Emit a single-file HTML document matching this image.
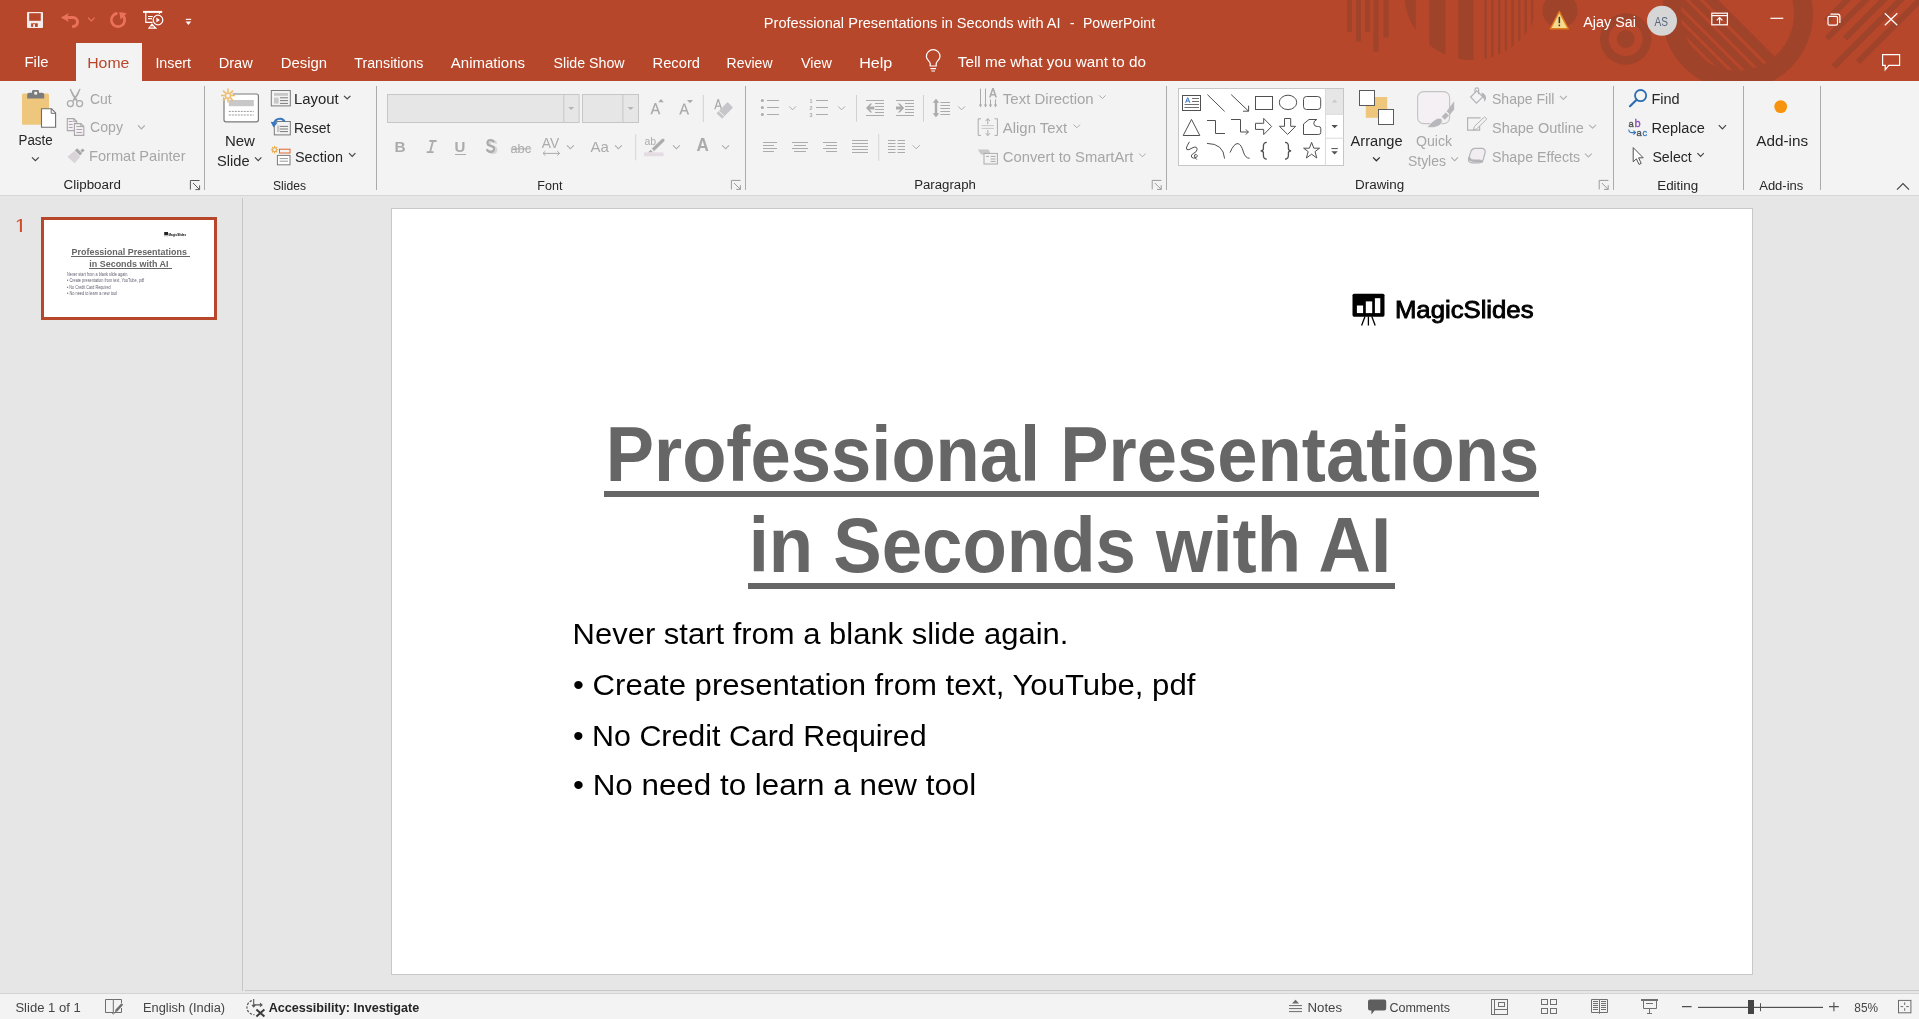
<!DOCTYPE html>
<html><head><meta charset="utf-8"><title>PowerPoint</title>
<style>
html,body{margin:0;padding:0;width:1919px;height:1019px;overflow:hidden;background:#E6E6E6;}
svg{position:absolute;left:0;top:0;display:block;will-change:transform;}
text{font-family:"Liberation Sans",sans-serif;white-space:pre;}
</style></head><body>
<svg width="1919" height="1019" viewBox="0 0 1919 1019">
<!-- backgrounds -->
<rect x="0" y="0" width="1919" height="81" fill="#B7472A"/>
<!-- title bar pattern -->
<defs>
  <clipPath id="cpA">
    <rect x="1405" y="0" width="10.7" height="80"/>
    <rect x="1429.3" y="0" width="16.1" height="80"/>
    <rect x="1458.2" y="0" width="15.3" height="80"/>
    <rect x="1484.4" y="0" width="2.6" height="80"/>
    <rect x="1491" y="0" width="2.7" height="80"/>
    <rect x="1498" y="0" width="2.5" height="80"/>
    <rect x="1504.8" y="0" width="2.4" height="80"/>
    <rect x="1511.3" y="0" width="2.5" height="80"/>
    <rect x="1518" y="0" width="2.5" height="80"/>
    <rect x="1524.6" y="0" width="2.5" height="80"/>
    <rect x="1530.9" y="0" width="2.6" height="80"/>
  </clipPath>
  <clipPath id="cpRing"><circle cx="1737.5" cy="14" r="56.5"/></clipPath>
  <clipPath id="cpTop"><rect x="0" y="0" width="1919" height="81"/></clipPath>
</defs>
<g fill="#9F432B" clip-path="url(#cpTop)">
  <rect x="1347" y="0" width="5" height="32"/>
  <rect x="1356" y="0" width="5" height="41.4"/>
  <rect x="1365" y="0" width="5" height="32"/>
  <rect x="1373.5" y="0" width="5" height="51.6"/>
  <rect x="1383.6" y="0" width="5" height="37.5"/>
  <circle cx="1472" cy="-8" r="68" clip-path="url(#cpA)"/>
  <circle cx="1560" cy="10.5" r="17.5"/>
  <path d="M1625.7 39 m-25.7 0 a25.7 25.7 0 1 0 51.4 0 a25.7 25.7 0 1 0 -51.4 0 Z M1625.7 39 m-17 0 a17 17 0 1 1 34 0 a17 17 0 1 1 -34 0 Z" fill-rule="evenodd"/>
  <circle cx="1625.7" cy="39" r="9"/>
  <path d="M1737.5 14 m-75.5 0 a75.5 75.5 0 1 0 151 0 a75.5 75.5 0 1 0 -151 0 Z M1737.5 14 m-56.5 0 a56.5 56.5 0 1 1 113 0 a56.5 56.5 0 1 1 -113 0 Z" fill-rule="evenodd"/>
  <g clip-path="url(#cpRing)">
    <path d="M1600 -118.3 L1950 231.7 L1600 231.7 Z"/>
    <g stroke="#B7472A" stroke-width="3.2">
      <line x1="1650" y1="-51.7" x2="1820" y2="118.3"/>
      <line x1="1650" y1="-37.5" x2="1820" y2="132.5"/>
      <line x1="1650" y1="-22.5" x2="1820" y2="147.5"/>
      <line x1="1650" y1="-10" x2="1820" y2="160"/>
      <line x1="1650" y1="2.5" x2="1820" y2="172.5"/>
    </g>
  </g>
  <g stroke="#9F432B" stroke-width="6">
    <line x1="1826" y1="21" x2="1870" y2="-23"/>
    <line x1="1827" y1="38.5" x2="1890" y2="-24.5"/>
    <line x1="1845" y1="38.5" x2="1908" y2="-24.5"/>
    <line x1="1833.8" y1="66.7" x2="1925" y2="-24.5"/>
    <line x1="1858" y1="62" x2="1945" y2="-25"/>
  </g>
</g>
<!-- QAT -->
<g>
  <rect x="27" y="12" width="16" height="16" rx="1" fill="#F4ECEA"/>
  <rect x="29.2" y="13.2" width="11.6" height="7.6" fill="#B7472A"/>
  <rect x="31.1" y="23.3" width="6.7" height="3.6" fill="#B7472A"/>
  <rect x="33.1" y="24.2" width="1.9" height="2.8" fill="#F4ECEA"/>
</g>
<path d="M60.8 17.5 L68.8 12.9 L67.6 16 H73 A6 6 0 0 1 73 28 H72.2 V25 H73 A3 3 0 0 0 73 19 H67.6 L68.8 22.1 Z" fill="#EA725A"/>
<path d="M88 17.6 L91.3 21 L94.6 17.6" fill="none" stroke="#EA725A" stroke-width="1.1"/>
<path d="M117.42 13.37 A6.65 6.65 0 1 0 122.4 15" fill="none" stroke="#EA725A" stroke-width="2.7"/>
<path d="M119.2 12.1 L126.7 13.3 L120.6 19.6 Z" fill="#EA725A"/>
<g fill="none" stroke="#FFFFFF" stroke-width="1.2">
  <path d="M145.8 12.6 V22.3 H152.6"/>
  <path d="M159.5 12.6 V14"/>
  <path d="M148 16.5 H152.8 M148 18.6 H152"/>
  <circle cx="158" cy="20" r="4.8"/>
</g>
<rect x="143" y="10.9" width="19.2" height="2" fill="#FFFFFF"/>
<path d="M156.4 17.4 L159.8 20 L156.4 22.6 Z" fill="#FFFFFF"/>
<path d="M151.9 23.2 L157.2 28.8 H147.8 Z" fill="#FFFFFF"/>
<rect x="150.2" y="26.4" width="3.6" height="1.1" fill="#B7472A"/>
<rect x="185.8" y="18.8" width="5.4" height="1.1" fill="#FFFFFF"/>
<path d="M185.6 21.4 L191.2 21.4 L188.4 25 Z" fill="#FFFFFF"/>
<!-- warning -->
<path d="M1559.3 11.6 L1568.2 28.8 L1550.4 28.8 Z" fill="#F6D98C" stroke="#E07B1E" stroke-width="1.4" stroke-linejoin="round"/>
<rect x="1558.6" y="16.8" width="1.5" height="6.4" fill="#333"/>
<rect x="1558.6" y="24.6" width="1.5" height="1.6" fill="#333"/>
<!-- avatar -->
<circle cx="1662" cy="20.8" r="15" fill="#D6D6D6"/>
<!-- window controls -->
<g fill="none" stroke="#FFFFFF" stroke-width="1.2">
  <rect x="1711.8" y="13.2" width="15.6" height="11.6"/>
  <path d="M1711.8 15.6 H1727.4"/>
  <path d="M1719.6 23.8 V17.8 M1716.8 20.4 L1719.6 17.6 L1722.4 20.4"/>
  <path d="M1770.4 18.3 H1783.3"/>
  <rect x="1828" y="16.3" width="9.5" height="8.8" rx="1.4"/>
  <path d="M1830.4 14.2 H1837.5 A2.4 2.4 0 0 1 1839.9 16.6 V23"/>
  <path d="M1884.8 13.3 L1897.3 25.2 M1897.3 13.3 L1884.8 25.2"/>
  <path d="M1882.6 54.6 H1899.6 V65.4 H1888.8 L1885.2 69.8 V65.4 H1882.6 Z"/>
</g>
<!-- lightbulb -->
<g fill="none" stroke="#FFFFFF" stroke-width="1.2">
  <path d="M930.2 66 V63.6 C930.2 61.2 926.4 59.6 926.4 56.4 A6.8 6.8 0 0 1 940 56.4 C940 59.6 936.2 61.2 936.2 63.6 V66 Z"/>
  <path d="M930.4 68.6 H936 M931.4 71 H935"/>
</g>

<rect x="76" y="43" width="66" height="38" fill="#F3F3F3"/>
<rect x="0" y="81" width="1919" height="114" fill="#F3F3F3"/>
<rect x="0" y="195" width="1919" height="1" fill="#D6D6D6"/>
<rect x="0" y="196" width="1919" height="794" fill="#E6E6E6"/>
<rect x="242" y="198" width="1" height="793" fill="#C6C6C6"/>
<rect x="245" y="990" width="1674" height="1" fill="#C6C6C6"/>
<rect x="0" y="993" width="1919" height="1" fill="#D4D4D4"/>
<rect x="0" y="994" width="1919" height="25" fill="#F3F3F3"/>
<!-- slide -->
<rect x="391.5" y="208.5" width="1361" height="766" fill="#FFFFFF" stroke="#C8C8C8" stroke-width="1"/>
<rect x="604" y="491" width="935" height="6" fill="#666666"/>
<rect x="748" y="583" width="647" height="6" fill="#666666"/>
<!-- thumbnail -->
<rect x="42.5" y="218.5" width="173" height="100" fill="#FFFFFF" stroke="#B7472A" stroke-width="3"/>
<rect x="71" y="256" width="119" height="1" fill="#666666"/>
<rect x="89" y="268" width="83" height="1" fill="#666666"/>
<!-- ribbon separators -->
<g fill="#ABABAB">
  <rect x="204" y="86" width="1" height="104"/>
  <rect x="376" y="86" width="1" height="104"/>
  <rect x="745" y="86" width="1" height="104"/>
  <rect x="1166" y="86" width="1" height="104"/>
  <rect x="1613" y="86" width="1" height="104"/>
  <rect x="1743" y="86" width="1" height="104"/>
  <rect x="1820" y="86" width="1" height="104"/>
</g>
<!-- ===== Clipboard ===== -->
<rect x="22" y="93.5" width="27" height="31.3" rx="1.5" fill="#EEC67C"/>
<path d="M27.2 98.4 V94.6 Q27.2 92.7 29.2 92.7 H32 V91.4 Q32 90 33.4 90 H37.6 Q39 90 39 91.4 V92.7 H42.2 Q44.2 92.7 44.2 94.6 V98.4 Z" fill="#7B7B7B"/>
<rect x="34.3" y="91.8" width="2.8" height="2.8" fill="#F3F3F3"/>
<path d="M41.5 108.8 H51.6 L55.6 112.9 V127.2 H41.5 Z" fill="#FFFFFF" stroke="#6E6E6E" stroke-width="1.1"/>
<path d="M51.2 108.8 V113.3 H55.6" fill="none" stroke="#6E6E6E" stroke-width="1"/>
<g fill="none" stroke="#444444" stroke-width="1.2">
  <path d="M32 157.3 L35.4 160.7 L38.8 157.3"/>
  <path d="M88 17.6" />
</g>
<!-- scissors -->
<path d="M69.6 89 L70.8 88.8 Q73.4 94.6 77.8 100.2 L76.4 101.4 Q71.4 95.6 69.6 89 Z" fill="#ABABAB"/>
<path d="M80.6 89 L79.4 88.8 Q76.8 94.6 72.4 100.2 L73.8 101.4 Q78.8 95.6 80.6 89 Z" fill="#ABABAB"/>
<g fill="none" stroke="#ABABAB" stroke-width="1.3">
  <circle cx="70.4" cy="103.6" r="3"/>
  <circle cx="79.6" cy="103.6" r="3"/>
</g>
<!-- copy -->
<g fill="#F5EFF5" stroke="#A8A8A8" stroke-width="1.1">
  <path d="M67.3 118.6 H73.8 L76.8 121.6 V130.6 H67.3 Z"/>
  <path d="M74.4 123.6 H80.8 L83.8 126.6 V135.4 H74.4 Z"/>
</g>
<g fill="none" stroke="#A8A8A8" stroke-width="1">
  <path d="M73.8 118.6 V121.6 H76.8 M80.8 123.6 V126.6 H83.8"/>
  <path d="M68.8 121.5 H72.6 M68.8 124.5 H72.6 M68.8 127.5 H72.6"/>
  <path d="M76.4 126.5 H82.2 M76.4 129.5 H82.2 M76.4 132.5 H82.2"/>
</g>
<path d="M138 125.4 L141.4 128.8 L144.8 125.4" fill="none" stroke="#ABABAB" stroke-width="1.2"/>
<!-- format painter -->
<path d="M67.4 156.8 L74.4 151 L80.2 156.8 L74.6 163.2 Z" fill="#D8D4D8"/>
<path d="M74.8 150.4 L77.2 148.2 L82.2 153.2 L80 155.6 Z" fill="#A8A8A8"/>
<path d="M80.4 150.4 L82.6 148.4 L84.6 150.4 L82.4 152.4 Z" fill="#A8A8A8"/>
<!-- launcher -->
<g fill="none" stroke="#5A5A5A" stroke-width="1">
  <path d="M190.4 189.6 V180.5 H199.6"/>
  <path d="M193 183 L199.6 189.6 M199.6 185.4 V189.6 H195.4"/>
</g>
<!-- ===== Slides ===== -->
<rect x="224" y="94" width="34.4" height="27.8" rx="2" fill="#FFFFFF" stroke="#7A7A7A" stroke-width="1.2"/>
<rect x="228.8" y="100" width="25" height="6.2" fill="#C8C8C8"/>
<path d="M228.8 111.4 H253.8 M228.8 115 H253.8" stroke="#9A9A9A" stroke-width="1" stroke-dasharray="2 1"/>
<circle cx="228" cy="95.6" r="5" fill="#F3F3F3"/>
<g stroke="#EDBD6E" stroke-width="1.5">
  <path d="M228 88.6 V92.4 M228 98.8 V102.6 M221 95.6 H224.8 M231.2 95.6 H235 M223 90.6 L225.7 93.3 M230.3 97.9 L233 100.6 M233 90.6 L230.3 93.3 M225.7 97.9 L223 100.6"/>
</g>
<circle cx="228" cy="95.6" r="2.6" fill="none" stroke="#EDBD6E" stroke-width="1.4"/>
<path d="M255 157.4 L258.2 160.6 L261.4 157.4" fill="none" stroke="#444444" stroke-width="1.2"/>
<!-- layout -->
<g fill="none" stroke="#7A7A7A" stroke-width="1">
  <rect x="271.3" y="90.5" width="19" height="15.4"/>
  <path d="M274 100 H276.8 M280 97.8 H288 M280 100.6 H288 M280 103.4 H288"/>
</g>
<rect x="274" y="93" width="14" height="2.8" fill="#C8C8C8"/>
<rect x="274" y="97.6" width="4.6" height="6" fill="#C8C8C8"/>
<path d="M344 95.8 L347.2 99 L350.4 95.8" fill="none" stroke="#444444" stroke-width="1.2"/>
<!-- reset -->
<g fill="none" stroke="#7A7A7A" stroke-width="1">
  <rect x="274.3" y="121.5" width="16" height="13.4"/>
  <path d="M280 126.4 H288 M280 129 H288 M280 131.6 H288"/>
</g>
<rect x="277" y="125.4" width="2.6" height="6.6" fill="#C8C8C8"/>
<path d="M273.4 125.4 Q274.6 118.6 280.4 118.8 Q283.4 119 284.6 121.6" fill="none" stroke="#3A78BE" stroke-width="2"/>
<path d="M270.6 121.8 L273.6 127.6 L277.8 122.6 Z" fill="#3A78BE"/>
<!-- section -->
<g stroke="#EBA63E" stroke-width="1.1">
  <path d="M274.6 146 V153.4 M270.9 149.7 H278.3 M272 147.1 L277.2 152.3 M277.2 147.1 L272 152.3"/>
</g>
<circle cx="274.6" cy="149.7" r="1.9" fill="#F3F3F3" stroke="#EBA63E" stroke-width="1"/>
<rect x="279.5" y="149.2" width="10.5" height="3.8" fill="none" stroke="#E0662A" stroke-width="1"/>
<rect x="277.4" y="155.4" width="12.6" height="9.4" fill="#FFFFFF" stroke="#7A7A7A" stroke-width="1"/>
<path d="M279.6 158.6 H288 M279.6 161.2 H288" stroke="#9A9A9A" stroke-width="1"/>
<path d="M349 153.2 L352.2 156.4 L355.4 153.2" fill="none" stroke="#444444" stroke-width="1.2"/>
<!-- ===== Font ===== -->
<rect x="387.5" y="94.5" width="191.6" height="28" fill="#E6E6E6" stroke="#C6C6C6" stroke-width="1"/>
<rect x="563.3" y="95" width="1" height="27" fill="#C6C6C6"/>
<path d="M568.2 107 H574.2 L571.2 110 Z" fill="#B4B4B4"/>
<rect x="582.5" y="94.5" width="56" height="28" fill="#E6E6E6" stroke="#C6C6C6" stroke-width="1"/>
<rect x="622.4" y="95" width="1" height="27" fill="#C6C6C6"/>
<path d="M627.6 107 H633.6 L630.6 110 Z" fill="#B4B4B4"/>
<g fill="#ABABAB">
  <path d="M650.4 114.2 L654.6 103 H656.2 L660.4 114.2 H658.6 L657.6 111.2 H653.2 L652.2 114.2 Z M653.7 109.7 H657.1 L655.4 104.9 Z"/>
  <path d="M658.2 102.2 L661 99 L663.8 102.2 Z"/>
  <path d="M679.2 114.6 L683.4 103.4 H685 L689.2 114.6 H687.4 L686.4 111.6 H682 L681 114.6 Z M682.5 110.1 H685.9 L684.2 105.3 Z"/>
  <path d="M687 100 L690 103.2 L693 100 Z"/>
</g>
<rect x="702.8" y="95" width="1" height="27" fill="#D0D0D0"/>
<g fill="#ABABAB">
  <path d="M714.2 109.2 L717.6 99 H718.8 L722.2 109.2 H720.8 L720 106.8 H716.4 L715.6 109.2 Z M716.8 105.4 H719.6 L718.2 101.2 Z"/>
</g>
<path d="M727.6 103 L732.1 107.5 L722.1 117.8 L717.3 113.4 Z" fill="#C6C6CA" stroke="#C6C6CA" stroke-width="1.2" stroke-linejoin="round"/>
<path d="M719 111.3 L724.2 116.1" stroke="#F3F3F3" stroke-width="1"/>
<!-- B I U S abc AV Aa -->
<text x="394.4" y="152.4" font-size="15.4" font-weight="bold" fill="#ABABAB" font-family="Liberation Sans">B</text>
<path d="M429.4 141 H436.6 M426.6 152.2 H433.6 M433 141 L430 152.2" fill="none" stroke="#ABABAB" stroke-width="1.8"/>
<text x="454.6" y="152.2" font-size="15" font-weight="bold" fill="#ABABAB" font-family="Liberation Sans">U</text>
<rect x="455" y="154" width="11" height="1" fill="#ABABAB"/>
<text transform="translate(486.4,153.2) scale(0.78,1)" font-size="19.6" font-weight="bold" fill="#D6D6D6" font-family="Liberation Sans" x="1.6" y="1.2">S</text>
<text transform="translate(485.4,153.2) scale(0.78,1)" font-size="19.6" font-weight="bold" fill="#ABABAB" font-family="Liberation Sans">S</text>
<text x="510.4" y="153.4" font-size="12.6" fill="#ABABAB" font-family="Liberation Sans" transform="translate(510.4,0) scale(1.02,1) translate(-510.4,0)">abc</text>
<rect x="510.6" y="148.4" width="20.6" height="1" fill="#ABABAB"/>
<text x="541.8" y="148.4" font-size="13.8" fill="#ABABAB" font-family="Liberation Sans">AV</text>
<path d="M543 153.4 H559.6 M545.4 151.2 L543 153.4 L545.4 155.6 M557.2 151.2 L559.6 153.4 L557.2 155.6" fill="none" stroke="#ABABAB" stroke-width="1"/>
<text x="590.6" y="152.2" font-size="15" fill="#ABABAB" font-family="Liberation Sans">Aa</text>
<rect x="635.2" y="134" width="1" height="26.4" fill="#D6D6D6"/>
<text x="644.4" y="145.2" font-size="10.4" fill="#ABABAB" font-family="Liberation Sans">ab</text>
<path d="M651.6 148.6 L661.8 138.8 Q663 137.8 664 138.8 L664.6 139.6 Q665.2 140.6 664.2 141.6 L654 151.4 Z" fill="#ABABAB" stroke="#F3F3F3" stroke-width="0.6"/>
<path d="M650.6 149.8 L653 152.2 L650.6 152.4 L648 152.4 Z" fill="#ABABAB"/>
<rect x="644" y="152.4" width="19.6" height="3.8" fill="#E4DCE2"/>
<text x="696.4" y="150.8" font-size="18" font-weight="bold" fill="#ABABAB" font-family="Liberation Sans" transform="translate(696.4,0) scale(0.95,1) translate(-696.4,0)">A</text>
<g fill="none" stroke="#ABABAB" stroke-width="1.1">
  <path d="M567 145.4 L570.4 148.8 L573.8 145.4"/>
  <path d="M615 145.4 L618.4 148.8 L621.8 145.4"/>
  <path d="M673 145.4 L676.4 148.8 L679.8 145.4"/>
  <path d="M722.2 145.4 L725.6 148.8 L729 145.4"/>
</g>
<g fill="none" stroke="#9A9A9A" stroke-width="1">
  <path d="M731.4 189.4 V180.4 H740.6"/>
  <path d="M734 183 L740.4 189.4 M740.4 185.2 V189.4 H736.2"/>
</g>
<!-- ===== Paragraph ===== -->
<g fill="#ABABAB">
  <circle cx="762.4" cy="100.5" r="1.5"/><circle cx="762.4" cy="107.5" r="1.5"/><circle cx="762.4" cy="114.5" r="1.5"/>
</g>
<g fill="none" stroke="#ABABAB" stroke-width="1">
  <path d="M767 100.5 H779 M767 107.5 H779 M767 114.5 H779"/>
  <path d="M816 100.5 H828 M816 107.5 H828 M816 114.5 H828"/>
  <path d="M789.2 106.4 L792.6 109.8 L796 106.4 M838.2 106.4 L841.6 109.8 L845 106.4 M958.2 106.4 L961.6 109.8 L965 106.4"/>
</g>
<text x="809.6" y="102.6" font-size="5.4" font-weight="bold" fill="#ABABAB" font-family="Liberation Sans">1</text>
<text x="809.6" y="109.8" font-size="5.4" font-weight="bold" fill="#ABABAB" font-family="Liberation Sans">2</text>
<text x="809.6" y="116.8" font-size="5.4" font-weight="bold" fill="#ABABAB" font-family="Liberation Sans">3</text>
<rect x="856" y="95" width="1" height="26.6" fill="#D0D0D0"/>
<g fill="none" stroke="#ABABAB" stroke-width="1">
  <path d="M866 100.5 H884 M875 103.5 H884 M875 106.5 H884 M875 109.5 H884 M875 112.5 H884 M866 115.5 H884"/>
  <path d="M896 100.5 H914 M905 103.5 H914 M905 106.5 H914 M905 109.5 H914 M905 112.5 H914 M896 115.5 H914"/>
</g>
<path d="M866 108 L870.4 103.6 H872.4 L869.6 106.6 H874.4 V109.4 H869.6 L872.4 112.4 H870.4 Z" fill="#ABABAB"/>
<path d="M904.2 108 L899.8 103.6 H897.8 L900.6 106.6 H896 V109.4 H900.6 L897.8 112.4 H899.8 Z" fill="#ABABAB"/>
<rect x="923" y="95" width="1" height="26.6" fill="#D0D0D0"/>
<g fill="none" stroke="#ABABAB" stroke-width="1">
  <path d="M940.4 102.5 H950 M940.4 105.5 H950 M940.4 108.5 H950 M940.4 111.5 H950 M940.4 114.5 H950"/>
</g>
<rect x="934.8" y="101.4" width="2.4" height="13.2" fill="#ABABAB"/>
<path d="M932.6 102.8 L936 98.8 L939.4 102.8 Z M932.6 113.2 L936 117.2 L939.4 113.2 Z" fill="#ABABAB"/>
<!-- text direction -->
<g fill="none" stroke="#ABABAB" stroke-width="1">
  <path d="M980.5 88.6 V107 M985.5 88.6 V107 M990.5 99.4 V107 M995.5 99.4 V107"/>
  <path d="M1099.2 95.4 L1102.4 98.6 L1105.6 95.4"/>
</g>
<path d="M978.8 104.6 L980.5 107.6 L982.2 104.6 Z M983.8 104.6 L985.5 107.6 L987.2 104.6 Z M988.8 104.6 L990.5 107.6 L992.2 104.6 Z M993.8 104.6 L995.5 107.6 L997.2 104.6 Z" fill="#ABABAB"/>
<path d="M989 97.6 L992.2 88 H993.8 L997 97.6 H995.4 L994.7 95.4 H991.3 L990.6 97.6 Z M991.8 94 H994.2 L993 90.4 Z" fill="#ABABAB"/>
<!-- align text -->
<g fill="none" stroke="#ABABAB" stroke-width="1">
  <path d="M981 118.8 H978.2 V135.4 H981 M994.6 118.8 H997.4 V135.4 H994.6"/>
  <path d="M981.6 125.6 H994 M981.6 128.4 H994" stroke="#C8C8C8"/>
  <path d="M987.8 118.6 V124.2 M985.6 121 L987.8 118.6 L990 121 M987.8 130 V135.6 M985.6 133.2 L987.8 135.6 L990 133.2"/>
  <path d="M1073.6 124.6 L1076.8 127.8 L1080 124.6"/>
</g>
<!-- smartart -->
<path d="M977.8 149.4 H988.6 L991 154.6 H981 Z" fill="#C8C8C8"/>
<rect x="984" y="153.4" width="13.4" height="10.6" fill="#F3F3F3" stroke="#ABABAB" stroke-width="1"/>
<path d="M986 156.4 H989 M990.6 156.4 H995.6 M990.6 159 H995.6 M990.6 161.4 H995.6" stroke="#ABABAB" stroke-width="1"/>
<path d="M1139.2 153.6 L1142.4 156.8 L1145.6 153.6" fill="none" stroke="#ABABAB" stroke-width="1"/>
<!-- align -->
<g fill="none" stroke="#ABABAB" stroke-width="1">
  <path d="M763 142.5 H777 M763 145.5 H774 M763 148.5 H777 M763 151.5 H774"/>
  <path d="M792 142.5 H808 M794 145.5 H806 M792 148.5 H808 M794 151.5 H806"/>
  <path d="M823 142.5 H837 M826 145.5 H837 M823 148.5 H837 M826 151.5 H837"/>
  <path d="M852 140.5 H868 M852 143.5 H868 M852 146.5 H868 M852 149.5 H868 M852 152.5 H868"/>
  <path d="M888 140.5 H895.5 M888 143.5 H895.5 M888 146.5 H895.5 M888 149.5 H895.5 M888 152.5 H895.5"/>
  <path d="M897.5 140.5 H905 M897.5 143.5 H905 M897.5 146.5 H905 M897.5 149.5 H905 M897.5 152.5 H905"/>
  <path d="M912.6 145.2 L916.2 148.8 L919.8 145.2"/>
</g>
<rect x="878.2" y="133.8" width="1" height="27" fill="#D6D6D6"/>
<g fill="none" stroke="#9A9A9A" stroke-width="1">
  <path d="M1152.2 189.4 V180.4 H1161.4"/>
  <path d="M1154.8 183 L1161.2 189.4 M1161.2 185.2 V189.4 H1157"/>
</g>
<!-- ===== Drawing ===== -->
<rect x="1178.5" y="88.5" width="165" height="77" fill="#FFFFFF" stroke="#C6C6C6" stroke-width="1"/>
<rect x="1325.5" y="89" width="17.5" height="25.3" fill="#E6E6E6"/>
<path d="M1325.5 88.5 V165.5 M1325.5 114.3 H1343.5 M1325.5 138.2 H1343.5" fill="none" stroke="#DADADA" stroke-width="1"/>
<path d="M1331.8 102.4 H1337.4 L1334.6 99.6 Z" fill="#C8C8C8"/>
<path d="M1331.4 125 H1337.8 L1334.6 128.2 Z" fill="#505050"/>
<path d="M1331.4 148.6 H1337.8" stroke="#505050" stroke-width="1"/>
<path d="M1331.4 151.2 H1337.8 L1334.6 154.4 Z" fill="#505050"/>
<g fill="none" stroke="#505050" stroke-width="1">
  <rect x="1182.5" y="95.5" width="18" height="15"/>
  <path d="M1192 98.5 H1199 M1192 101.5 H1199 M1184.5 104.5 H1199 M1184.5 107.5 H1199" stroke="#707070"/>
  <path d="M1207.4 94.6 L1224.6 111.4"/>
  <path d="M1231.2 94.6 L1248.4 111 M1248.6 105.6 V111.2 H1243"/>
  <rect x="1255.5" y="96.5" width="17" height="13"/>
  <ellipse cx="1288" cy="102.4" rx="8.7" ry="7.2"/>
  <rect x="1303.5" y="96.5" width="17.2" height="13" rx="3"/>
  <path d="M1191.5 119.4 L1199.8 135.5 H1183.2 Z"/>
  <path d="M1207 120.5 H1215.5 V133.5 H1225"/>
  <path d="M1231 119.5 H1240.5 V132 H1248.4 M1245.8 129.4 L1248.4 132 L1245.8 134.6"/>
  <path d="M1255.5 123.3 H1263.7 V118.4 L1271.6 126.5 L1263.7 134.6 V129.4 H1255.5 Z"/>
  <path d="M1284.5 118.5 H1290.7 V126.3 H1295.6 L1287.6 134.4 L1279.4 126.3 H1284.5 Z"/>
  <path d="M1303.5 134.5 V124 L1309 119.5 H1316.8 Q1313.4 120.8 1313.8 123.8 Q1314.2 126.5 1317.4 126.5 H1318.6 Q1320.8 126.5 1320.8 128.7 V132.3 Q1320.8 134.5 1318.6 134.5 Z"/>
  <path d="M1189.4 141.8 Q1187 145.6 1186.4 148 Q1186.2 150.4 1189 149.6 L1193 147.6 Q1197.4 145.8 1197 149.8 Q1196.6 152 1193.8 153.2 Q1190.2 155 1191.6 157.2 Q1193.4 159.2 1196.4 157.4 Q1198.6 155.6 1196.2 154.4 Q1193.6 154 1194.8 157.4 L1196.8 159.6"/>
  <path d="M1207 143.4 Q1223.6 143.6 1224.6 158.6"/>
  <path d="M1230 152.6 Q1234 143 1238 143.6 Q1241.4 144.4 1243.4 152 Q1245.6 158.6 1249.6 158.2"/>
  <path d="M1266.8 142.4 Q1263.4 142.6 1263.4 146 V148.6 Q1263.4 150.8 1260.6 150.8 Q1263.4 150.8 1263.4 153 V155.6 Q1263.4 159 1266.8 159.2" stroke-width="1.3"/>
  <path d="M1285 142.4 Q1288.4 142.6 1288.4 146 V148.6 Q1288.4 150.8 1291.2 150.8 Q1288.4 150.8 1288.4 153 V155.6 Q1288.4 159 1285 159.2" stroke-width="1.3"/>
  <path d="M1311.6 142.4 L1313.8 148.2 H1319.6 L1315 151.6 L1316.8 158 L1311.6 154.2 L1306.4 158 L1308.2 151.6 L1303.6 148.2 H1309.4 Z"/>
</g>
<path d="M1185 102.8 L1187.2 97.6 H1188.2 L1190.4 102.8 H1189.3 L1188.8 101.5 H1186.6 L1186.1 102.8 Z M1186.9 100.6 H1188.5 L1187.7 98.7 Z" fill="#3B78C0"/>
<!-- arrange -->
<rect x="1365.8" y="97" width="21.4" height="20.8" fill="#EEC67C"/>
<rect x="1359.5" y="90.5" width="15" height="15" fill="#FFFFFF" stroke="#5A5A5A" stroke-width="1"/>
<rect x="1378.5" y="109.5" width="15" height="15" fill="#FFFFFF" stroke="#5A5A5A" stroke-width="1"/>
<path d="M1373 157.4 L1376.4 160.8 L1379.8 157.4" fill="none" stroke="#333333" stroke-width="1.3"/>
<!-- quick styles -->
<rect x="1417.6" y="91.6" width="32" height="32" rx="6" fill="#F4F0F4" stroke="#C4C4C4" stroke-width="1.1"/>
<path d="M1427 127.6 Q1431.4 121.2 1437 118.4 Q1440.6 117.4 1442.2 119.6 Q1443.2 123 1439.2 125.8 Q1434.4 128.6 1427 127.6 Z" fill="#B8B8BC" stroke="#F3F3F3" stroke-width="0.8"/>
<path d="M1441.6 116.8 L1445.6 112.4 L1449 115.6 L1444.8 119.8 Z" fill="#B8B8BC"/>
<path d="M1446.6 111.2 L1454.2 101.2 V109.4 L1450 114.4 Z" fill="#B8B8BC"/>
<path d="M1451.2 157.4 L1454.6 160.8 L1458 157.4" fill="none" stroke="#ABABAB" stroke-width="1.1"/>
<!-- shape fill / outline / effects -->
<g fill="none" stroke="#B4B4B8" stroke-width="1.2">
  <path d="M1470.6 97 L1476.8 90.8 L1482.8 96.8 L1476.4 103.2 Z"/>
  <path d="M1475 93 V89.6 Q1475 87.8 1476.8 87.8 Q1478.6 87.8 1478.6 89.6 V94.2"/>
  <path d="M1480.6 117.8 H1467.6 V130.2 H1479.6 V126"/>
  <path d="M1560 96 L1563.4 99.4 L1566.8 96 M1589.2 124.8 L1592.6 128.2 L1596 124.8 M1585 153.6 L1588.4 157 L1591.8 153.6"/>
</g>
<path d="M1481.6 92.6 Q1486.4 94.4 1486 98.6 L1484.8 102 L1483.6 98.6 Q1483.4 96.8 1481.8 96.4 Z" fill="#B4B4B8"/>
<path d="M1473.4 130.2 L1474.4 126.4 L1484.6 116.8 L1486.8 119 L1476.8 128.8 Z" fill="none" stroke="#B4B4B8" stroke-width="1"/>
<path d="M1470.6 152.4 Q1471.6 148.4 1475.4 148.4 H1481.8 Q1485.4 148.6 1485.2 152.2 L1483.6 158.4 Q1482.6 162.8 1478.6 162.8 H1472.2 Q1468 162.6 1468.6 158.6 Z" fill="#F1EDF1" stroke="#B4B4B8" stroke-width="1.2"/>
<path d="M1469 157.4 Q1469.6 160.6 1473.6 160.8 H1479.8 L1482.8 162" fill="none" stroke="#B4B4B8" stroke-width="2.4"/>
<g fill="none" stroke="#9A9A9A" stroke-width="1">
  <path d="M1599.2 189.4 V180.4 H1608.4"/>
  <path d="M1601.8 183 L1608.2 189.4 M1608.2 185.2 V189.4 H1604"/>
</g>
<!-- ===== Editing ===== -->
<circle cx="1640.6" cy="95.6" r="5.6" fill="none" stroke="#2E6DB4" stroke-width="1.8"/>
<path d="M1636.6 99.8 L1630 106.2" stroke="#2E6DB4" stroke-width="2.2" stroke-linecap="round"/>
<text x="1628.4" y="126.6" font-size="9.4" fill="#505050" stroke="#505050" stroke-width="0.35" font-family="Liberation Sans">a</text>
<text x="1634.4" y="126.6" font-size="11" fill="#8E55B5" stroke="#8E55B5" stroke-width="0.35" font-family="Liberation Sans">b</text>
<text x="1636.6" y="135.6" font-size="9.4" fill="#505050" stroke="#505050" stroke-width="0.35" font-family="Liberation Sans">a</text>
<text x="1642.4" y="135.6" font-size="9.4" fill="#3A78BE" stroke="#3A78BE" stroke-width="0.35" font-family="Liberation Sans">c</text>
<path d="M1628.8 129.4 Q1628.8 132.6 1632 132.6 H1635.4 M1633.4 130.6 L1635.6 132.6 L1633.4 134.6" fill="none" stroke="#3A78BE" stroke-width="1.1"/>
<path d="M1633.2 147.6 V161.8 L1636.4 158.8 L1639 164.4 L1641.2 163.4 L1638.6 157.8 L1643.2 157.8 Z" fill="#FFFFFF" stroke="#505050" stroke-width="1" stroke-linejoin="round"/>
<g fill="none" stroke="#444444" stroke-width="1.2">
  <path d="M1718.8 125.2 L1722.4 128.8 L1726 125.2"/>
  <path d="M1697.4 153.2 L1700.6 156.4 L1703.8 153.2"/>
</g>
<!-- ===== Add-ins ===== -->
<circle cx="1780.7" cy="106.6" r="6.4" fill="#F7930E"/>
<path d="M1897 189.6 L1903 183.6 L1909 189.6" fill="none" stroke="#444444" stroke-width="1.2"/>
<g fill="none" stroke="#6E6E6E" stroke-width="1">
  <path d="M105.5 999.5 H113.3 V1012.5 H105.5 Z"/>
  <path d="M113.3 999.5 H121.5 V1003 M121.5 1008 V1012.5 H113.3"/>
  <path d="M111.6 1012.5 L113.3 1014 L115 1012.5"/>
</g>
<path d="M115.4 1009.8 L121.4 1003.2 L123.2 1004.8 L117.2 1011.4 L115 1012 Z" fill="#6E6E6E"/>
<!-- accessibility -->
<path d="M251.8 1000.6 A7.2 7.2 0 0 0 254.4 1014.6" fill="none" stroke="#555555" stroke-width="1.2" stroke-dasharray="2.4 1.4"/>
<g fill="none" stroke="#555555" stroke-width="1.1">
  <path d="M253.7 999 V1006.4 M252 1004.8 L253.7 1006.8 L255.4 1004.8"/>
  <path d="M254 1004.9 H261.6 M260 1003.2 L262 1004.9 L260 1006.6"/>
</g>
<path d="M256.4 1009.6 L264.4 1016.4 M264.4 1009.6 L256.4 1016.4" stroke="#3A3A3A" stroke-width="2"/>
<!-- notes -->
<path d="M1292 1003.6 H1299 L1295.5 999.8 Z" fill="#6A6A6A"/>
<path d="M1289 1005.6 H1302 M1289 1008.6 H1302 M1289 1011.6 H1302" stroke="#6A6A6A" stroke-width="1"/>
<!-- comments -->
<path d="M1370 999.4 H1384.2 Q1386.2 999.4 1386.2 1001.4 V1008.6 Q1386.2 1010.6 1384.2 1010.6 H1374.6 L1371.4 1014.4 V1010.6 H1370 Q1368 1010.6 1368 1008.6 V1001.4 Q1368 999.4 1370 999.4 Z" fill="#5E5E5E"/>
<!-- view buttons -->
<g fill="none" stroke="#707070" stroke-width="1">
  <rect x="1491.5" y="999.5" width="16" height="15"/>
  <path d="M1494.5 999.5 V1014.5 M1494.5 1009.5 H1507.5"/>
  <rect x="1498.5" y="1002.5" width="6" height="4"/>
  <rect x="1541.5" y="999.5" width="6" height="5"/>
  <rect x="1550.5" y="999.5" width="6" height="5"/>
  <rect x="1541.5" y="1008.5" width="6" height="5"/>
  <rect x="1550.5" y="1008.5" width="6" height="5"/>
  <path d="M1591.5 999.5 H1599.5 V1012.5 H1591.5 Z M1599.5 999.5 H1607.5 V1012.5 H1599.5 Z"/>
  <path d="M1593 1001.5 H1598 M1593 1003.5 H1598 M1593 1005.5 H1598 M1593 1007.5 H1598 M1593 1009.5 H1598 M1601 1001.5 H1606 M1601 1003.5 H1606 M1601 1005.5 H1606 M1601 1007.5 H1606 M1601 1009.5 H1606"/>
  <path d="M1599.5 1012.5 V1013.8"/>
  <path d="M1643.5 1000.5 V1008.5 H1656.5 V1000.5 M1649.5 1008.5 V1013.5 M1647 1013.5 H1652"/>
  <path d="M1646 1003.5 H1653"/>
</g>
<rect x="1641" y="999" width="17" height="2" fill="#707070"/>
<!-- zoom -->
<path d="M1682 1006.6 H1691.6 M1829 1006.6 H1838.8 M1833.9 1002.2 V1011.2" stroke="#505050" stroke-width="1.1"/>
<rect x="1698" y="1006.8" width="125" height="1.2" fill="#505050"/>
<rect x="1760" y="1003.2" width="1" height="8" fill="#505050"/>
<rect x="1748" y="1000" width="6" height="14" fill="#444444"/>
<g fill="none" stroke="#6A6A6A" stroke-width="1">
  <rect x="1898.5" y="1000.4" width="12.4" height="12.4"/>
  <path d="M1904.7 1002.4 V1005 M1904.7 1008.2 V1010.8 M1900.6 1006.6 H1903.2 M1906.2 1006.6 H1908.8"/>
</g>
<!-- MagicSlides logo -->
<rect x="1352.5" y="293.7" width="32" height="23" rx="1.6" fill="#000000"/>
<rect x="1356.9" y="305.5" width="6.2" height="7.6" fill="#FFFFFF"/>
<rect x="1365.8" y="301.4" width="6.4" height="11.7" fill="#FFFFFF"/>
<rect x="1374.9" y="298.2" width="5.4" height="14.9" fill="#FFFFFF"/>
<path d="M1365 316.6 L1361.6 325.6 M1368.4 316.6 V325.6 M1371.8 316.6 L1375.2 325.6" stroke="#000000" stroke-width="1.3"/>
<!-- thumbnail logo -->
<rect x="164.2" y="232" width="3.8" height="3" fill="#222222"/>
<path d="M165 235 L164.6 236.4 M166 235 V236.4 M167 235 L167.4 236.4" stroke="#222" stroke-width="0.4"/>
<path d="M19.9 232 V220.6 L16.9 222.6 V221 L20.4 218.9 H21.9 V232 Z" fill="#D24A28"/>

<text transform="translate(763.86,28.00) scale(0.9411,1)" font-size="15.5" fill="#FFFFFF">Professional Presentations in Seconds with AI</text>
<text transform="translate(1069.80,28.00) scale(0.9400,1)" font-size="15.5" fill="#FFFFFF">-</text>
<text transform="translate(1082.89,28.00) scale(0.9119,1)" font-size="15.5" fill="#FFFFFF">PowerPoint</text>
<text transform="translate(1583.20,26.90) scale(0.9270,1)" font-size="15.5" fill="#FFFFFF">Ajay Sai</text>
<text transform="translate(1654.50,25.80) scale(0.8435,1)" font-size="12" fill="#55657D">AS</text>
<text transform="translate(24.54,67.20) scale(0.9591,1)" font-size="15.5" fill="#FFFFFF">File</text>
<text transform="translate(87.18,67.60) scale(1.0208,1)" font-size="15.5" fill="#B7472A">Home</text>
<text transform="translate(155.38,67.60) scale(0.9205,1)" font-size="15.5" fill="#FFFFFF">Insert</text>
<text transform="translate(218.66,67.60) scale(0.9423,1)" font-size="15.5" fill="#FFFFFF">Draw</text>
<text transform="translate(280.74,67.60) scale(0.9608,1)" font-size="15.5" fill="#FFFFFF">Design</text>
<text transform="translate(354.20,67.60) scale(0.9214,1)" font-size="15.5" fill="#FFFFFF">Transitions</text>
<text transform="translate(450.80,67.60) scale(0.9698,1)" font-size="15.5" fill="#FFFFFF">Animations</text>
<text transform="translate(553.50,67.60) scale(0.9177,1)" font-size="15.5" fill="#FFFFFF">Slide Show</text>
<text transform="translate(652.55,67.60) scale(0.9494,1)" font-size="15.5" fill="#FFFFFF">Record</text>
<text transform="translate(726.60,67.60) scale(0.9046,1)" font-size="15.5" fill="#FFFFFF">Review</text>
<text transform="translate(801.00,67.60) scale(0.9290,1)" font-size="15.5" fill="#FFFFFF">View</text>
<text transform="translate(859.16,67.60) scale(1.0411,1)" font-size="15.5" fill="#FFFFFF">Help</text>
<text transform="translate(957.80,66.60) scale(0.9845,1)" font-size="15.5" fill="#FFFFFF">Tell me what you want to do</text>
<text transform="translate(18.48,145.40) scale(0.9219,1)" font-size="14.5" fill="#262626">Paste</text>
<text transform="translate(90.00,103.60) scale(0.9629,1)" font-size="14.5" fill="#A6A6A6">Cut</text>
<text transform="translate(90.00,131.80) scale(0.9740,1)" font-size="14.5" fill="#A6A6A6">Copy</text>
<text transform="translate(88.99,161.30) scale(1.0088,1)" font-size="14.5" fill="#A6A6A6">Format Painter</text>
<text transform="translate(63.60,189.30) scale(0.9917,1)" font-size="13.5" fill="#262626">Clipboard</text>
<text transform="translate(224.97,146.00) scale(1.0338,1)" font-size="14.5" fill="#262626">New</text>
<text transform="translate(217.00,166.00) scale(1.0100,1)" font-size="14.5" fill="#262626">Slide</text>
<text transform="translate(293.97,103.75) scale(1.0292,1)" font-size="14.5" fill="#262626">Layout</text>
<text transform="translate(294.04,133.00) scale(0.9634,1)" font-size="14.5" fill="#262626">Reset</text>
<text transform="translate(295.00,162.00) scale(0.9938,1)" font-size="14.5" fill="#262626">Section</text>
<text transform="translate(273.00,190.00) scale(0.8982,1)" font-size="13.5" fill="#262626">Slides</text>
<text transform="translate(537.37,189.80) scale(0.9291,1)" font-size="13.5" fill="#262626">Font</text>
<text transform="translate(1002.80,103.60) scale(1.0345,1)" font-size="14.5" fill="#A6A6A6">Text Direction</text>
<text transform="translate(1002.80,132.50) scale(1.0281,1)" font-size="14.5" fill="#A6A6A6">Align Text</text>
<text transform="translate(1002.80,162.00) scale(1.0204,1)" font-size="14.5" fill="#A6A6A6">Convert to SmartArt</text>
<text transform="translate(914.22,189.40) scale(0.9783,1)" font-size="13.5" fill="#262626">Paragraph</text>
<text transform="translate(1350.60,145.90) scale(1.0093,1)" font-size="14.5" fill="#262626">Arrange</text>
<text transform="translate(1416.00,145.90) scale(0.9758,1)" font-size="14.5" fill="#A6A6A6">Quick</text>
<text transform="translate(1408.00,165.80) scale(0.9609,1)" font-size="14.5" fill="#A6A6A6">Styles</text>
<text transform="translate(1492.00,104.00) scale(0.9695,1)" font-size="14.5" fill="#A6A6A6">Shape Fill</text>
<text transform="translate(1492.00,132.70)" font-size="14.5" fill="#A6A6A6">Shape Outline</text>
<text transform="translate(1492.00,161.50) scale(0.9803,1)" font-size="14.5" fill="#A6A6A6">Shape Effects</text>
<text transform="translate(1355.00,189.00) scale(0.9956,1)" font-size="13.5" fill="#262626">Drawing</text>
<text transform="translate(1651.40,104.10)" font-size="14.5" fill="#262626">Find</text>
<text transform="translate(1651.40,133.20) scale(1.0032,1)" font-size="14.5" fill="#262626">Replace</text>
<text transform="translate(1652.40,161.80) scale(0.9784,1)" font-size="14.5" fill="#262626">Select</text>
<text transform="translate(1657.21,189.70) scale(0.9932,1)" font-size="13.5" fill="#262626">Editing</text>
<text transform="translate(1756.20,145.70) scale(1.0549,1)" font-size="14.5" fill="#262626">Add-ins</text>
<text transform="translate(1759.20,189.70) scale(0.9647,1)" font-size="13.5" fill="#262626">Add-ins</text>
<text transform="translate(15.40,1011.80) scale(0.9681,1)" font-size="13.5" fill="#444444">Slide 1 of 1</text>
<text transform="translate(143.05,1011.80) scale(0.9517,1)" font-size="13.5" fill="#444444">English (India)</text>
<text transform="translate(268.70,1011.80) scale(0.9351,1)" font-size="13.5" fill="#262626" font-weight="bold">Accessibility: Investigate</text>
<text transform="translate(1307.52,1011.80) scale(0.9821,1)" font-size="13.5" fill="#444444">Notes</text>
<text transform="translate(1389.40,1011.80) scale(0.9296,1)" font-size="13.5" fill="#444444">Comments</text>
<text transform="translate(1854.30,1011.80) scale(0.8773,1)" font-size="13.5" fill="#444444">85%</text>
<text transform="translate(1394.92,317.70) scale(1.0809,1)" font-size="23.8" fill="#000000" stroke="#000000" stroke-width="0.9">MagicSlides</text>
<text transform="translate(605.66,480.90) scale(0.9283,1)" font-size="78" fill="#666666" font-weight="bold">Professional Presentations</text>
<text transform="translate(748.65,572.30) scale(0.9308,1)" font-size="78" fill="#666666" font-weight="bold">in Seconds with AI</text>
<text transform="translate(572.56,643.80) scale(1.0192,1)" font-size="30.4" fill="#000000">Never start from a blank slide again.</text>
<text transform="translate(572.98,694.80) scale(1.0242,1)" font-size="30.4" fill="#000000">• Create presentation from text, YouTube, pdf</text>
<text transform="translate(573.00,745.50)" font-size="30.4" fill="#000000">• No Credit Card Required</text>
<text transform="translate(572.97,794.90) scale(1.0324,1)" font-size="30.4" fill="#000000">• No need to learn a new tool</text>
<text transform="translate(71.50,254.70) scale(0.9236,1)" font-size="9.7" fill="#666666" font-weight="bold">Professional Presentations</text>
<text transform="translate(89.30,266.70) scale(0.9222,1)" font-size="9.7" fill="#666666" font-weight="bold">in Seconds with AI</text>
<text transform="translate(67.00,276.00) scale(0.8189,1)" font-size="4.7" fill="#606070">Never start from a blank slide again.</text>
<text transform="translate(67.00,281.90) scale(0.8223,1)" font-size="4.7" fill="#606070">• Create presentation from text, YouTube, pdf</text>
<text transform="translate(67.00,288.90) scale(0.8011,1)" font-size="4.7" fill="#606070">• No Credit Card Required</text>
<text transform="translate(67.00,294.80) scale(0.8301,1)" font-size="4.7" fill="#606070">• No need to learn a new tool</text>
<text transform="translate(168.50,236.00) scale(0.7317,1)" font-size="4.2" fill="#000000" font-weight="bold">MagicSlides</text>
</svg>
</body></html>
